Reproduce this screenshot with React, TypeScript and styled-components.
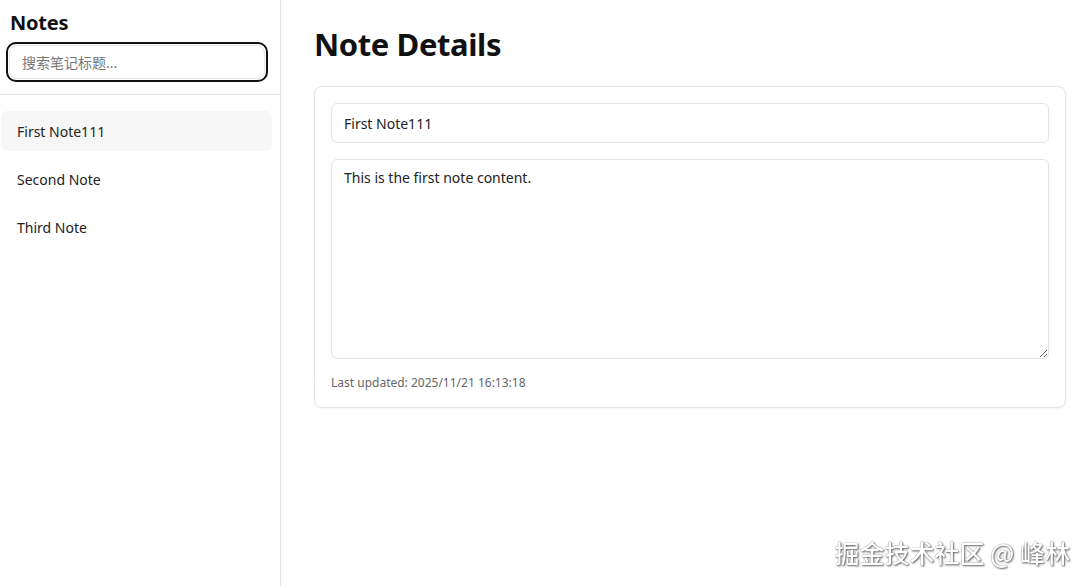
import React from 'react';
import styled, { createGlobalStyle } from 'styled-components';

const notes = [
  { id: 1, title: 'First Note111' },
  { id: 2, title: 'Second Note' },
  { id: 3, title: 'Third Note' },
];

function App() {
  return (
    <>
      <GlobalStyle />
      <Layout>
        <Sidebar>
          <SidebarHeader>
            <SidebarTitle>Notes</SidebarTitle>
            <SearchFrame>
              <SearchInput placeholder="搜索笔记标题..." />
            </SearchFrame>
          </SidebarHeader>
          <NoteList>
            {notes.map((note) => (
              <NoteItem key={note.id} $active={note.id === 1}>
                {note.title}
              </NoteItem>
            ))}
          </NoteList>
        </Sidebar>
        <Main>
          <PageTitle>Note Details</PageTitle>
          <Card>
            <TitleInput defaultValue="First Note111" />
            <ContentArea defaultValue="This is the first note content." />
            <Updated>Last updated: 2025/11/21 16:13:18</Updated>
          </Card>
        </Main>
      </Layout>
      <Watermark>掘金技术社区 @ 峰林</Watermark>
    </>
  );
}

const GlobalStyle = createGlobalStyle`
  * {
    box-sizing: border-box;
  }
  body {
    margin: 0;
    background: #fff;
    color: #111;
    font-family: "Noto Sans", "Noto Sans CJK SC", sans-serif;
  }
`;

const Layout = styled.div`
  display: flex;
  height: 100vh;
`;

const Sidebar = styled.aside`
  width: 281px;
  flex-shrink: 0;
  border-right: 1px solid #e5e5e5;
  display: flex;
  flex-direction: column;
`;

const SidebarHeader = styled.div`
  padding: 9px 12px 12px 6px;
  border-bottom: 1px solid #e5e5e5;
`;

const SidebarTitle = styled.h2`
  margin: 0 0 5px 4px;
  font-size: 20px;
  line-height: 28px;
  font-weight: 700;
  letter-spacing: -0.2px;
  color: #111;
`;

const SearchFrame = styled.div`
  border: 2px solid #111;
  border-radius: 10px;
  padding: 1px;
`;

const SearchInput = styled.input`
  display: block;
  width: 100%;
  height: 34px;
  border: 1px solid #e6e6e6;
  border-radius: 8px;
  padding: 0 12px;
  font-family: "Noto Sans", "Noto Sans CJK SC", sans-serif;
  font-size: 14px;
  color: #333;
  outline: none;
  &::placeholder {
    color: #777;
  }
`;

const NoteList = styled.ul`
  list-style: none;
  margin: 0;
  padding: 16px 8px 0 1px;
  display: flex;
  flex-direction: column;
  gap: 8px;
`;

const NoteItem = styled.li<{ $active?: boolean }>`
  height: 40px;
  display: flex;
  align-items: center;
  padding: 0 16px;
  border-radius: 6px;
  font-size: 14px;
  color: #222;
  background: ${({ $active }) => ($active ? '#f7f7f7' : 'transparent')};
`;

const Main = styled.main`
  flex: 1;
  padding: 22px 22px 0 33px;
`;

const PageTitle = styled.h1`
  margin: 0 0 20px;
  font-size: 31px;
  line-height: 44px;
  font-weight: 700;
  letter-spacing: -0.4px;
  color: #111;
`;

const Card = styled.section`
  border: 1px solid #e5e5e5;
  border-radius: 8px;
  padding: 16px;
  display: flex;
  flex-direction: column;
  gap: 16px;
  box-shadow: 0 1px 2px rgba(0, 0, 0, 0.05);
`;

const TitleInput = styled.input`
  height: 40px;
  border: 1px solid #e5e5e5;
  border-radius: 6px;
  padding: 0 12px;
  font-family: "Noto Sans", "Noto Sans CJK SC", sans-serif;
  font-size: 14px;
  color: #222;
  outline: none;
`;

const ContentArea = styled.textarea`
  height: 200px;
  border: 1px solid #e5e5e5;
  border-radius: 6px;
  padding: 8px 12px;
  font-family: "Noto Sans", "Noto Sans CJK SC", sans-serif;
  font-size: 14px;
  line-height: 20px;
  color: #222;
  outline: none;
  resize: vertical;
`;

const Updated = styled.div`
  font-size: 12px;
  line-height: 16px;
  color: #666;
`;

const Watermark = styled.div`
  position: fixed;
  right: 18px;
  bottom: 16px;
  font-family: "Noto Sans CJK SC", sans-serif;
  font-size: 25px;
  font-weight: 500;
  color: #fff;
  text-shadow: 1px 1px 2px rgba(0, 0, 0, 0.6), 0 0 1px rgba(0, 0, 0, 0.6);
  pointer-events: none;
`;

export default App;
